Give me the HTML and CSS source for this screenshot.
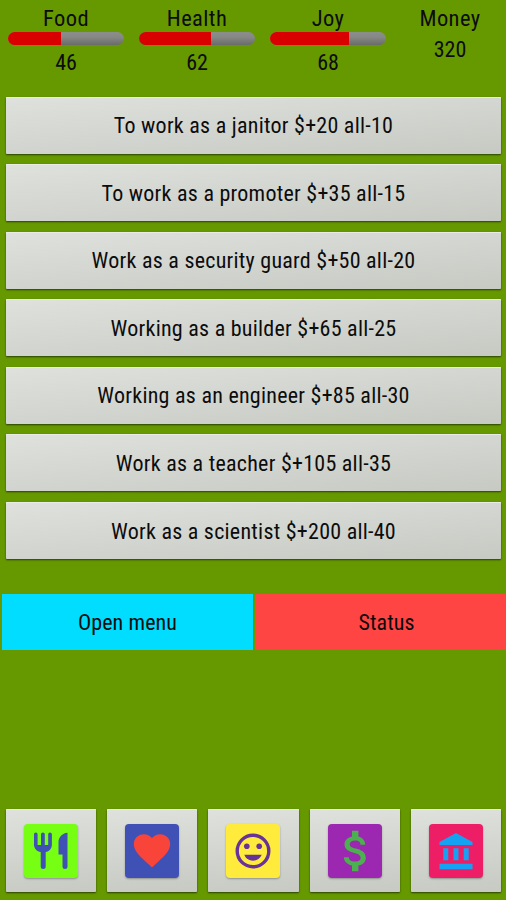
FILE: index.html
```html
<!DOCTYPE html>
<html lang="en">
<head>
    <meta charset="UTF-8">
    <meta name="viewport" content="width=device-width, initial-scale=1.0">
    <title>Work</title>
    <link rel="stylesheet" href="styles.css">
</head>
<body>
    <div class="stats">
        <div class="stat">
            <span class="label">Food</span>
            <div class="bar"><div class="fill" style="width:46%"></div></div>
            <span class="value">46</span>
        </div>
        <div class="stat">
            <span class="label">Health</span>
            <div class="bar"><div class="fill" style="width:62%"></div></div>
            <span class="value">62</span>
        </div>
        <div class="stat">
            <span class="label">Joy</span>
            <div class="bar"><div class="fill" style="width:68%"></div></div>
            <span class="value">68</span>
        </div>
        <div class="stat money">
            <span class="label">Money</span>
            <span class="value">320</span>
        </div>
    </div>

    <div class="jobs">
        <button class="btn"><span>To work as a janitor $+20 all-10</span></button>
        <button class="btn"><span>To work as a promoter $+35 all-15</span></button>
        <button class="btn"><span>Work as a security guard $+50 all-20</span></button>
        <button class="btn"><span>Working as a builder $+65 all-25</span></button>
        <button class="btn"><span>Working as an engineer $+85 all-30</span></button>
        <button class="btn"><span>Work as a teacher $+105 all-35</span></button>
        <button class="btn"><span>Work as a scientist $+200 all-40</span></button>
    </div>

    <div class="actions">
        <button class="open-menu"><span>Open menu</span></button>
        <button class="status"><span>Status</span></button>
    </div>

    <div class="tabs">
        <button class="btn tab" aria-label="Food">
            <svg class="icon food" viewBox="0 0 54 54">
                <path d="M11.800 8.500q1.800 0 1.800 1.800V21h3.400V10.300q0-1.800 1.900-1.800t1.900 1.800V21h3.400V10.300q0-1.800 1.800-1.800t1.900 1.800V20.500c0 4.200-2.600 6.800-6.200 7.600V43q0 2-2.500 2t-2.500-2V28.100C12.700 27.300 10 24.700 10 20.500V10.300q0-1.800 1.800-1.800z"/>
                <path d="M43.500 9.200V43q0 2-2.500 2t-2.500-2V30.500h-4V18c0-4.800 3.600-8.700 9-9.300z"/>
            </svg>
        </button>
        <button class="btn tab" aria-label="Health">
            <svg class="icon health" viewBox="0 0 54 54">
                <path d="M27 43.500 24.400 41.100C15 32.600 8.800 27 8.800 20.100 8.800 14.500 13.200 10.200 18.800 10.200c3.200 0 6.200 1.500 8.200 3.800 2-2.300 5-3.800 8.200-3.800 5.600 0 10 4.300 10 9.900 0 6.900-6.200 12.500-15.600 21z"/>
            </svg>
        </button>
        <button class="btn tab" aria-label="Joy">
            <svg class="icon joy" viewBox="0 0 54 54">
                <circle class="face" cx="27" cy="27" r="15.800"/>
                <circle cx="20.800" cy="22.200" r="2.800"/>
                <circle cx="33.200" cy="22.200" r="2.800"/>
                <path d="M18.300 30.800h17.400c-1.400 3.700-4.700 5.900-8.700 5.900s-7.300-2.200-8.700-5.900z"/>
            </svg>
        </button>
        <button class="btn tab" aria-label="Money">
            <svg class="icon cash" viewBox="0 0 54 54">
                <path d="M27.900 24.600c-4.700-1.200-6.200-2.500-6.200-4.400 0-2.300 2.100-3.800 5.600-3.800 3.700 0 5.100 1.800 5.200 4.400h4.800c-.1-3.800-2.500-7.200-6.900-8.300V6.800h-6.400v5.600c-4 .9-7.500 3.700-7.500 7.800 0 4.900 4.100 7.300 9.900 8.700 5.200 1.200 6.200 3.100 6.200 5 0 1.400-1 3.700-5.600 3.700-4.300 0-6-1.900-6.200-4.400h-5c.3 4.700 4 7.400 8.200 8.300v5.700h6.400v-5.600c4-.8 7.400-3.200 7.400-7.700 0-6-5.200-8.100-9.900-9.300z"/>
            </svg>
        </button>
        <button class="btn tab" aria-label="Bank">
            <svg class="icon bank" viewBox="0 0 54 54">
                <path d="M10.500 21v-3L27 9l16.500 9v3zM14.300 24.300h5v12h-5zM24.500 24.300h5v12h-5zM34.700 24.300h5v12h-5zM10.500 39.800h33v5.500h-33z"/>
            </svg>
        </button>
    </div>
</body>
</html>
```

FILE: styles.css
```css
* {
    box-sizing: border-box;
}

body {
    margin: 0;
    height: 900px;
    overflow: hidden;
    background: #669900;
    color: #0c0c0c;
    font-family: "Roboto Condensed", Roboto, sans-serif;
    font-stretch: 75%;
    font-size: 22px;
    line-height: 28px;
    display: flex;
    flex-direction: column;
}

button {
    border: none;
    padding: 2px 0 0;
    font: inherit;
    color: inherit;
    cursor: pointer;
}

.stats {
    display: flex;
    height: 96.500px;
    padding: 4px 0 0 8px;
    gap: 15px;
}

.stat {
    width: 116px;
    display: flex;
    flex-direction: column;
    align-items: center;
}

.stat.money {
    width: 98px;
}

.label {
    font-size: 22.500px;
    letter-spacing: 0.400px;
}

.money .value {
    margin-top: 4px;
}

.bar {
    width: 100%;
    height: 13px;
    margin-bottom: 4px;
    border-radius: 7px;
    overflow: hidden;
    background: linear-gradient(#8b8e8b, #858885 40%, #696c69);
}

.fill {
    height: 100%;
    background: #d90000;
}

.jobs {
    display: flex;
    flex-direction: column;
    gap: 10.600px;
    padding: 0 5px 0 6px;
}

.jobs .btn {
    letter-spacing: 0.250px;
}

.btn {
    height: 57px;
    border-radius: 1px;
    background: linear-gradient(175deg, #dfe2dc, #d3d6d0 50%, #c6cac3);
    box-shadow: 0 1px 2px rgba(0, 0, 0, 0.6), inset 0 1px 0 #e9ece6;
}

.actions {
    display: flex;
    gap: 2px;
    margin-top: 34.500px;
    padding-left: 2px;
}

.actions button {
    height: 56px;
    padding-top: 3px;
    letter-spacing: 0.100px;
}

.actions .open-menu {
    width: 251px;
    background: #00ddff;
}

.actions .status {
    flex: 1;
    padding-left: 12px;
    background: #ff4444;
}

.tabs {
    display: flex;
    gap: 11.200px;
    margin-top: auto;
    padding: 0 5px 8px 6px;
}

.tab {
    flex: 1;
    height: 83px;
    padding: 0;
    display: flex;
    align-items: center;
    justify-content: center;
}

.icon {
    width: 54px;
    height: 54px;
    border-radius: 4px;
    box-shadow: 0 1px 2px rgba(0, 0, 0, 0.3);
}

.food {
    background: #76ff13;
    fill: #3f51b5;
}

.health {
    background: #3f51b5;
    fill: #f9443a;
}

.joy {
    background: #ffeb3b;
    fill: #673399;
}

.face {
    fill: none;
    stroke: #673399;
    stroke-width: 3.400;
}

.cash {
    background: #9c27b0;
    fill: #4caf50;
}

.bank {
    background: #ed1e66;
    fill: #16a2f3;
}
```
